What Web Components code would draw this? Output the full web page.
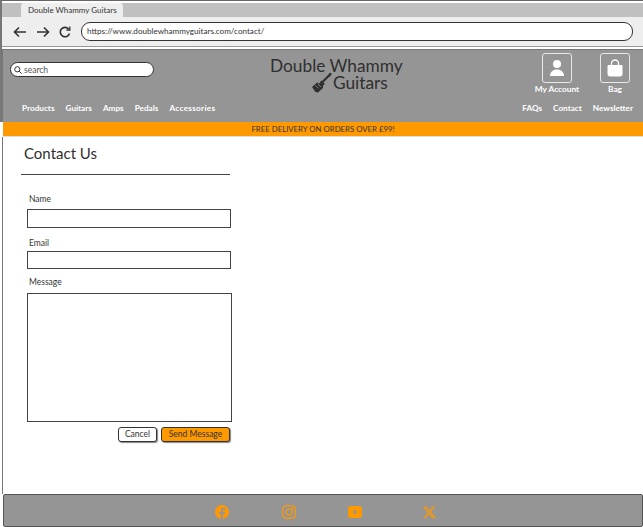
<!DOCTYPE html>
<html>
<head>
<meta charset="utf-8">
<title>Double Whammy Guitars</title>
<style>
  html, body { margin: 0; height: 100%; background: #fff; overflow: hidden; }
  body { font-family: Lato, "Open Sans", sans-serif; color: #333; }
  .page { display: flex; flex-direction: column; width: 643px; height: 527px; box-sizing: border-box; }
  .grow { flex: 1; }
</style>
</head>
<body>
<div class="page">
  <browser-chrome title-text="Double Whammy Guitars" url="https://www.doublewhammyguitars.com/contact/"></browser-chrome>
  <site-header></site-header>
  <promo-bar>FREE DELIVERY ON ORDERS OVER £99!</promo-bar>
  <contact-form class="grow"></contact-form>
  <site-footer></site-footer>
</div>

<template id="browser-chrome-tpl">
  <style>
    :host { display: block; height: 49px; box-sizing: border-box; background: #fff; border-left: 2px solid #777; border-top: 1px solid #666; padding-top: 2px; }
    .tabs { display: flex; height: 14px; background: #c0c0c0; padding-left: 19px; }
    .tab { width: 102px; height: 14px; background: #eee; border-radius: 3px 3px 0 0; box-sizing: border-box; padding-left: 7px; font-size: 8px; line-height: 15px; color: #333; white-space: nowrap; }
    .bar { display: flex; align-items: center; height: 29px; background: #eee; padding-left: 11px; padding-right: 10px; border-bottom: 1px solid #999; }
    svg { display: block; flex: none; }
    .nav { display: flex; gap: 9px; align-items: center; margin-right: 10px; }
    .url { flex: 1; height: 19px; box-sizing: border-box; background: #fff; border: 1px solid #333; border-radius: 9px; font-size: 8.100px; line-height: 17px; padding-left: 5px; color: #333; margin-top: -1px; }
  </style>
  <div class="tabs"><div class="tab"></div></div>
  <div class="bar">
    <div class="nav">
      <svg width="14" height="12" viewBox="0 0 14 12" fill="none" stroke="#333" stroke-width="1.6"><path d="M13 6H1.500M6 1.500 1.500 6 6 10.500"/></svg>
      <svg width="14" height="12" viewBox="0 0 14 12" fill="none" stroke="#333" stroke-width="1.600"><path d="M1 6h11.500M8 1.500 12.500 6 8 10.500"/></svg>
      <svg width="12" height="12" viewBox="0 0 12 12" fill="none" stroke="#333" stroke-width="1.600"><path d="M10.500 7.500A4.700 4.700 0 1 1 9.600 3"/><path d="M10.800 .6v3.400H7.400" stroke-width="1.300"/></svg>
    </div>
    <div class="url"></div>
  </div>
</template>

<template id="site-header-tpl">
  <style>
    :host { display: block; height: 73px; box-sizing: border-box; background: #959595; border-left: 3px solid #777; border-top: 1px solid #777; color: #fff; font-family: Lato, sans-serif; }
    .top { display: grid; grid-template-columns: 267px 1fr auto; height: 50px; }
    .search { display: flex; align-items: center; gap: 2px; width: 144px; height: 15px; box-sizing: border-box; background: #fff; border: 1px solid #333; border-radius: 8px; margin: 12px 0 0 7px; padding-left: 3px; font-size: 8.500px; color: #555; }
    .logo { color: #2f2f2f; font-size: 17.300px; line-height: 17px; padding-top: 7px; }
    .logo div:last-child { display: flex; align-items: center; gap: 1px; height: 17px; padding-left: 41px; }
    .actions { display: flex; gap: 28px; padding: 3px 13px 0 0; }
    .action { display: flex; flex-direction: column; align-items: center; width: 30px; font-size: 8.300px; font-weight: 700; white-space: nowrap; }
    .box { display: flex; align-items: center; justify-content: center; width: 30px; height: 30px; box-sizing: border-box; border: 1px solid #e8e8e8; border-radius: 3px; margin-bottom: 1px; }
    .nav { display: flex; justify-content: space-between; padding: 3px 10px 0 19px; font-size: 8.200px; font-weight: 700; }
    .group { display: flex; gap: 11px; }
    .accessories { letter-spacing: .3px; }
    svg { display: block; flex: none; }
  </style>
  <div class="top">
    <div class="search">
      <svg width="8" height="8" viewBox="0 0 8 8" fill="none" stroke="#333" stroke-width="1"><circle cx="3.300" cy="3.300" r="2.600"/><path d="M5.200 5.200 7.600 7.600"/></svg>
      <span>search</span>
    </div>
    <div class="logo">
      <div>Double Whammy</div>
      <div>
        <svg width="21" height="21" viewBox="0 0 21 21">
          <path d="M1 15 6 10.500 8.500 11.500 10 8.500 14 12 12 13.500 12 16 7 20.500 4.500 20Z" fill="#2f2f2f"/>
          <path d="M11 10.500 18 3.500" stroke="#2f2f2f" stroke-width="2.200" fill="none"/>
          <path d="M17 3.500 18.500 .8 20.600 1.200 20.200 3 18.500 5Z" fill="#2f2f2f"/>
          <path d="M4.500 13.300 7.500 16.300M6.800 11.800 9.800 14.800" stroke="#959595" stroke-width=".8" fill="none"/>
        </svg>
        <span>Guitars</span>
      </div>
    </div>
    <div class="actions">
      <div class="action">
        <div class="box"><svg width="16" height="18" viewBox="0 0 16 18" fill="#fff"><circle cx="8" cy="5" r="4"/><path d="M1 17c0-4 3-6.500 7-6.500s7 2.500 7 6.500Z"/></svg></div>
        My Account
      </div>
      <div class="action">
        <div class="box"><svg width="16" height="18" viewBox="0 0 16 18"><path d="M2 6h12c1 0 1.500 .5 1.500 1.500v7.500c0 1.500-1 2.500-2.500 2.500H3C1.500 17.500 .5 16.500 .5 15V7.500C.5 6.500 1 6 2 6Z" fill="#fff"/><path d="M4.500 7V4.500a3.500 3.500 0 0 1 7 0V7" fill="none" stroke="#fff" stroke-width="1.300"/></svg></div>
        Bag
      </div>
    </div>
  </div>
  <div class="nav">
    <div class="group"><span>Products</span><span>Guitars</span><span>Amps</span><span>Pedals</span><span class="accessories">Accessories</span></div>
    <div class="group"><span>FAQs</span><span>Contact</span><span>Newsletter</span></div>
  </div>
</template>

<template id="promo-bar-tpl">
  <style>
    :host { display: block; height: 15px; background: #ff9900; margin-left: 3px; text-align: center; font-size: 7.800px; line-height: 15px; color: #333; border-bottom: 1px solid #ddd; box-sizing: border-box; }
  </style>
  <slot></slot>
</template>

<template id="contact-form-tpl">
  <style>
    :host { display: block; box-sizing: border-box; background: #fff; border-left: 1px solid #777; margin-left: 2px; padding: 8px 0 0 18px; font-family: Lato, sans-serif; color: #333; font-size: 8.500px; }
    h1 { margin: 0 0 0 3px; font-size: 15px; line-height: 17px; font-weight: 400; color: #2f2f2f; }
    hr { width: 209px; height: 1px; margin: 12px 0 19px; border: 0; background: #444; }
    label { display: block; margin-left: 8px; height: 10px; line-height: 10px; }
    .field { width: 204px; box-sizing: border-box; background: #fff; border: 1px solid #444; display: block; }
    .name { height: 19px; margin: 5px 0 10px 6px; }
    .email { height: 18px; margin: 3px 0 8px 6px; }
    .message { height: 129px; margin: 6px 0 5px 6px; width: 205px; }
    .actions { display: flex; justify-content: flex-end; gap: 4px; width: 209px; }
    button { height: 15px; padding: 0; font: inherit; font-size: 8.500px; line-height: 13px; color: #333; border: 1px solid #333; border-radius: 3px; background: #fff; box-shadow: 1px 1px 1px #888; }
    .cancel { width: 39px; }
    .send { width: 69px; background: #ff9900; }
  </style>
  <h1>Contact Us</h1>
  <hr>
  <label>Name</label>
  <div class="field name"></div>
  <label>Email</label>
  <div class="field email"></div>
  <label>Message</label>
  <div class="field message"></div>
  <div class="actions">
    <button class="cancel">Cancel</button>
    <button class="send">Send Message</button>
  </div>
</template>

<template id="site-footer-tpl">
  <style>
    :host { display: block; height: 33px; box-sizing: border-box; background: #959595; border: 1px solid #555; border-radius: 2px; margin-left: 3px; }
    .icons { display: grid; grid-template-columns: 67px 66px 75px auto; margin-left: 211px; padding-top: 10px; align-items: center; }
    svg { display: block; }
  </style>
  <div class="icons">
    <svg width="14" height="14" viewBox="0 0 24 24" fill="#ff9900"><path d="M24 12.073c0-6.627-5.373-12-12-12s-12 5.373-12 12c0 5.990 4.388 10.954 10.125 11.854v-8.385H7.078v-3.470h3.047V9.430c0-3.007 1.792-4.669 4.533-4.669 1.312 0 2.686.235 2.686.235v2.953H15.830c-1.491 0-1.956.925-1.956 1.874v2.250h3.328l-.532 3.470h-2.796v8.385C19.612 23.027 24 18.062 24 12.073z"/></svg>
    <svg width="14" height="14" viewBox="0 0 14 14" fill="none" stroke="#ff9900" stroke-width="1.200"><rect x=".8" y=".8" width="12.400" height="12.400" rx="3"/><circle cx="7" cy="7" r="3"/><circle cx="10.500" cy="3.500" r=".5"/></svg>
    <svg width="14" height="12" viewBox="0 0 14 12"><rect width="14" height="12" y="0" rx="3" fill="#ff9900"/><path d="M5.500 3.500v5L9.500 6Z" fill="#959595"/></svg>
    <svg width="13" height="13" viewBox="0 0 24 24" fill="#ff9900"><path d="M18.901 1.153h3.680l-8.040 9.190L24 22.846h-7.406l-5.800-7.584-6.638 7.584H.474l8.600-9.830L0 1.154h7.594l5.243 6.932ZM17.610 20.644h2.039L6.486 3.240H4.298Z"/></svg>
  </div>
</template>

<script>
  // plain elements: each one just stamps its template
  class TemplateElement extends HTMLElement {
    constructor() {
      super();
      const template = document.getElementById(`${this.localName}-tpl`);
      this.attachShadow({ mode: 'open' });
      this.shadowRoot.appendChild(template.content.cloneNode(true));
    }
  }

  class BrowserChrome extends TemplateElement {
    connectedCallback() {
      this.shadowRoot.querySelector('.tab').textContent = this.getAttribute('title-text');
      this.shadowRoot.querySelector('.url').textContent = this.getAttribute('url');
    }
  }

  customElements.define('browser-chrome', BrowserChrome);
  customElements.define('site-header', class extends TemplateElement {});
  customElements.define('promo-bar', class extends TemplateElement {});
  customElements.define('contact-form', class extends TemplateElement {});
  customElements.define('site-footer', class extends TemplateElement {});
</script>
</body>
</html>
